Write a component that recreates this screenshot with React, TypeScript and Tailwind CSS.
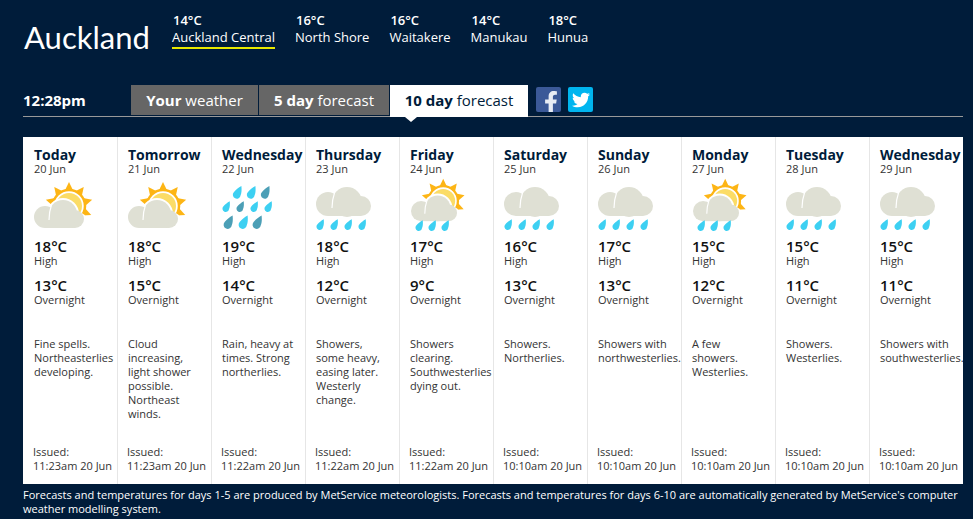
import React from 'react';
import { FaFacebookF, FaTwitter } from 'react-icons/fa';

const areas = [
  { temp: '14°C', name: 'Auckland Central', active: true },
  { temp: '16°C', name: 'North Shore' },
  { temp: '16°C', name: 'Waitakere' },
  { temp: '14°C', name: 'Manukau' },
  { temp: '18°C', name: 'Hunua' },
];

type IconKind = 'sun' | 'rain' | 'showers' | 'sunShowers';

const days: { day: string; date: string; icon: IconKind; high: string; low: string; text: string; issued: string }[] = [
  { day: 'Today', date: '20 Jun', icon: 'sun', high: '18°C', low: '13°C', text: 'Fine spells. Northeasterlies developing.', issued: '11:23am 20 Jun' },
  { day: 'Tomorrow', date: '21 Jun', icon: 'sun', high: '18°C', low: '15°C', text: 'Cloud increasing, light shower possible. Northeast winds.', issued: '11:23am 20 Jun' },
  { day: 'Wednesday', date: '22 Jun', icon: 'rain', high: '19°C', low: '14°C', text: 'Rain, heavy at times. Strong northerlies.', issued: '11:22am 20 Jun' },
  { day: 'Thursday', date: '23 Jun', icon: 'showers', high: '18°C', low: '12°C', text: 'Showers, some heavy, easing later. Westerly change.', issued: '11:22am 20 Jun' },
  { day: 'Friday', date: '24 Jun', icon: 'sunShowers', high: '17°C', low: '9°C', text: 'Showers clearing. Southwesterlies dying out.', issued: '11:22am 20 Jun' },
  { day: 'Saturday', date: '25 Jun', icon: 'showers', high: '16°C', low: '13°C', text: 'Showers. Northerlies.', issued: '10:10am 20 Jun' },
  { day: 'Sunday', date: '26 Jun', icon: 'showers', high: '17°C', low: '13°C', text: 'Showers with northwesterlies.', issued: '10:10am 20 Jun' },
  { day: 'Monday', date: '27 Jun', icon: 'sunShowers', high: '15°C', low: '12°C', text: 'A few showers. Westerlies.', issued: '10:10am 20 Jun' },
  { day: 'Tuesday', date: '28 Jun', icon: 'showers', high: '15°C', low: '11°C', text: 'Showers. Westerlies.', issued: '10:10am 20 Jun' },
  { day: 'Wednesday', date: '29 Jun', icon: 'showers', high: '15°C', low: '11°C', text: 'Showers with southwesterlies.', issued: '10:10am 20 Jun' },
];

const LIGHT = '#3dd0f2';
const TEAL = '#4c9fb6';
const CLOUD = '#dfe0d4';

function Drop({ x, y, s = 1, color = LIGHT }: { x: number; y: number; s?: number; color?: string }) {
  return (
    <path
      transform={`translate(${x} ${y}) scale(${s})`}
      fill={color}
      d="M4.4 -8 C4.8 -4 4.6 -1 3.6 1.2 A3.9 3.9 0 1 1 -3.2 -1.8 C-1.4 -4.2 1.6 -6.4 4.4 -8Z"
    />
  );
}

// circles are [cx, cy, r]
function Cloud({ big, left, right, bottom }: { big: number[]; left: number[]; right: number[]; bottom: number }) {
  const slitX = big[0] - big[2];
  return (
    <>
      <circle cx={left[0]} cy={left[1]} r={left[2]} fill={CLOUD} />
      <rect x={left[0]} y={left[1]} width={right[0] - left[0]} height={bottom - left[1]} fill={CLOUD} />
      <circle cx={right[0]} cy={right[1]} r={right[2]} fill={CLOUD} />
      <circle cx={big[0]} cy={big[1]} r={big[2]} fill={CLOUD} />
      <path d={`M${slitX + 2.5} ${big[1] - 9} Q${slitX} ${big[1] - 2} ${slitX} ${big[1] + 6}`} stroke="#fff" strokeWidth="1.2" fill="none" />
    </>
  );
}

const rayAngles = [-165, -128, -90, -52, -15, 22];

function Sun() {
  return (
    <g>
      {rayAngles.map((a) => {
        const r = (a * Math.PI) / 180;
        const tip = [35 + 24 * Math.cos(r), 26 + 24 * Math.sin(r)];
        const l = r - 0.26;
        const t = r + 0.26;
        const b1 = [35 + 16 * Math.cos(l), 26 + 16 * Math.sin(l)];
        const b2 = [35 + 16 * Math.cos(t), 26 + 16 * Math.sin(t)];
        return <polygon key={a} fill="#fdb515" points={`${tip[0]},${tip[1]} ${b1[0]},${b1[1]} ${b2[0]},${b2[1]}`} />;
      })}
      <circle cx="35" cy="26" r="16" fill="none" stroke="#fdb515" strokeWidth="2.5" />
      <circle cx="35" cy="26" r="13" fill="#fbdc66" />
    </g>
  );
}

function SunCloud() {
  return (
    <>
      <Sun />
      <circle cx="29" cy="34" r="16" fill="#fff" />
      <rect x="29" y="32" width="24" height="18" rx="9" fill="#fff" />
      <Cloud big={[29, 34, 14]} left={[11, 37, 11]} right={[41, 39, 9]} bottom={48} />
    </>
  );
}

function WeatherIcon({ kind }: { kind: IconKind }) {
  return (
    <svg viewBox="0 0 60 52" className="w-[60px] h-[52px] overflow-visible">
      {kind === 'sun' && <SunCloud />}
      {kind === 'rain' && (
        <>
          <Drop x={15} y={14} />
          <Drop x={29} y={14} />
          <Drop x={43} y={14} color={TEAL} />
          <Drop x={4} y={28} s={0.85} />
          <Drop x={18} y={28} color={TEAL} s={0.85} />
          <Drop x={32} y={28} s={0.85} />
          <Drop x={46} y={28} s={0.85} />
          <Drop x={6} y={44} color={TEAL} s={1.05} />
          <Drop x={21} y={44} s={1.05} />
          <Drop x={35} y={44} color={TEAL} s={1.05} />
        </>
      )}
      {kind === 'showers' && (
        <>
          <Cloud big={[31, 22, 15]} left={[12, 24, 12]} right={[45, 26, 10]} bottom={36} />
          <Drop x={4} y={46} s={0.85} />
          <Drop x={18} y={46} s={0.85} />
          <Drop x={32} y={46} s={0.85} />
          <Drop x={46} y={46} s={0.85} />
        </>
      )}
      {kind === 'sunShowers' && (
        <>
          <g transform="translate(1 -3) scale(0.92)">
            <SunCloud />
          </g>
          <Drop x={9} y={47} s={0.85} />
          <Drop x={22} y={47} s={0.85} />
          <Drop x={35} y={47} s={0.85} />
        </>
      )}
    </svg>
  );
}

export default function App() {
  return (
    <div className="h-[519px] overflow-hidden bg-[#001c3a] text-white font-['Open_Sans',sans-serif] pl-[23px] pr-[10px]">
      <div className="flex items-start pt-3 h-[85px]">
        <h1 className="font-['Lato',sans-serif] text-[31px] leading-[50px] w-[149px] pl-px">Auckland</h1>
        <div className="flex gap-5">
          {areas.map((a) => (
            <div key={a.name} className="flex flex-col">
              <span className="pl-px text-[13px] font-semibold leading-4">{a.temp}</span>
              <span className={`text-[13px] leading-[18px] pb-[1px] border-b-2 ${a.active ? 'border-[#e8e800]' : 'border-transparent'}`}>
                {a.name}
              </span>
            </div>
          ))}
        </div>
      </div>

      <div className="flex items-start h-[32px] border-b border-[#999999]">
        <div className="w-[108px] text-[15px] font-bold leading-[30px]">12:28pm</div>
        <div className="flex items-start">
          <div className="h-[30px] w-[127px] mr-px bg-[#666666] text-[15px] leading-[30px] text-center"><b>Your</b> weather</div>
          <div className="h-[30px] w-[130px] mr-px bg-[#666666] text-[15px] leading-[30px] text-center"><b>5 day</b> forecast</div>
          <div className="relative h-[32px] w-[138px] bg-white text-[#001c3a] text-[15px] leading-[30px] text-center">
            <b>10 day</b> forecast
            <span className="absolute left-[15px] top-[32px] w-0 h-0 border-x-[6px] border-x-transparent border-t-[5px] border-t-white" />
          </div>
        </div>
        <div className="flex gap-[7px] ml-2 mt-[2px]">
          <div className="w-[25px] h-[25px] rounded-[2px] overflow-hidden bg-[#3b5998] flex justify-end items-end">
            <FaFacebookF className="w-[16px] h-[22px] -mb-px mr-[2px] text-[#e8ecf4]" />
          </div>
          <div className="w-[25px] h-[25px] rounded-[2px] bg-[#00b5ef] flex items-center justify-center">
            <FaTwitter className="w-[18px] h-[18px] text-white" />
          </div>
        </div>
      </div>

      <div className="flex mt-5 h-[347px] bg-white overflow-hidden text-[#333333]">
        {days.map((d, i) => (
          <div key={i} className={`w-[94px] shrink-0 flex flex-col pt-[9px] pb-[11px] ${i > 0 ? 'border-l border-[#e6e6e6] pl-[10px]' : 'pl-[11px]'}`}>
            <div className="text-[14px] font-bold leading-[18px] text-[#001c3a] whitespace-nowrap">{d.day}</div>
            <div className="-mt-[2px] text-[11px] leading-[14px]">{d.date}</div>
            <div className="mt-1 h-[52px]"><WeatherIcon kind={d.icon} /></div>
            <div className="mt-[6px] text-[15px] font-semibold leading-4 text-[#111111]">{d.high}</div>
            <div className="text-[11px] leading-[14px]">High</div>
            <div className="mt-[9px] text-[15px] font-semibold leading-4 text-[#111111]">{d.low}</div>
            <div className="text-[11px] leading-[14px]">Overnight</div>
            <div className="mt-[30px] w-[76px] text-[11px] leading-[14px]">{d.text}</div>
            <div className="mt-auto -ml-px text-[11px] leading-[14px] whitespace-nowrap">
              Issued:<br />{d.issued}
            </div>
          </div>
        ))}
      </div>

      <p className="mt-[4px] text-[11px] leading-[14px]">
        Forecasts and temperatures for days 1-5 are produced by MetService meteorologists. Forecasts and temperatures for days 6-10 are automatically generated by MetService's computer weather modelling system.
      </p>
    </div>
  );
}
